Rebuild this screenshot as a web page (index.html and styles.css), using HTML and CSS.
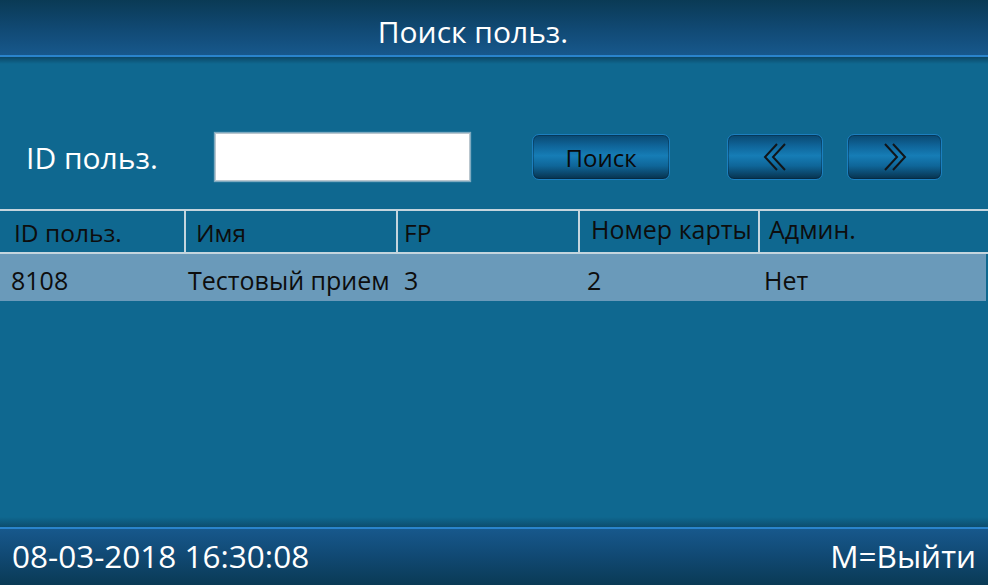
FILE: index.html
```html
<!DOCTYPE html>
<html lang="ru">

<head>
  <meta charset="UTF-8">
  <meta name="viewport" content="width=device-width, initial-scale=1.0">
  <title>Поиск польз.</title>
  <link rel="stylesheet" href="styles.css">
</head>

<body>

  <div class="topbar">Поиск польз.</div>

  <div class="main">

    <div class="toolbar">
      <label class="label" for="userid">ID польз.</label>
      <input type="text" id="userid" class="field">
      <button class="btn btn-search">Поиск</button>
      <button class="btn btn-prev">
        <svg width="24" height="28" viewBox="0 0 24 28">
          <polyline points="14,1 2,14 14,27" />
          <polyline points="22,1 10,14 22,27" />
        </svg>
      </button>
      <button class="btn btn-next">
        <svg width="24" height="28" viewBox="0 0 24 28">
          <polyline points="2,1 14,14 2,27" />
          <polyline points="10,1 22,14 10,27" />
        </svg>
      </button>
    </div>

    <div class="table">
      <div class="row head">
        <div class="cell">ID польз.</div>
        <div class="cell">Имя</div>
        <div class="cell">FP</div>
        <div class="cell">Номер карты</div>
        <div class="cell">Админ.</div>
      </div>
      <div class="row data">
        <div class="cell">8108</div>
        <div class="cell">Тестовый прием</div>
        <div class="cell">3</div>
        <div class="cell">2</div>
        <div class="cell">Нет</div>
      </div>
    </div>

  </div>

  <div class="statusbar">
    <span>08-03-2018 16:30:08</span>
    <span>M=Выйти</span>
  </div>

</body>

</html>
```

FILE: styles.css
```css
body {
  margin: 0;
  width: 988px;
  height: 585px;
  display: flex;
  flex-direction: column;
  font-family: 'Open Sans', 'DejaVu Sans', sans-serif;
  background-color: #0f6890;
  color: #fff;
  overflow: hidden;
}

.topbar {
  height: 57px;
  box-sizing: border-box;
  padding: 12px 42px 0 0;
  line-height: 40px;
  font-size: 30px;
  text-align: center;
  background: linear-gradient(to bottom, #0a3a55 0%, #114a75 55%, #17588c 100%);
  border-bottom: 2px solid #2a84cc;
}

.main {
  flex: 1;
  display: flex;
  flex-direction: column;
  background: linear-gradient(to bottom, #0b4766 0, #0f6890 7px, #0f6890 calc(100% - 10px), #0c4d6e 100%);
}

.toolbar {
  display: flex;
  align-items: center;
  height: 48px;
  margin-top: 76px;
  padding-left: 26px;
}

.label {
  width: 189px;
  font-size: 30px;
}

.field {
  width: 255px;
  height: 48px;
  box-sizing: border-box;
  margin: 0;
  border: 1px solid #b9c6ce;
  background-color: #fff;
  box-shadow: 0 0 1px 1px rgba(200, 215, 225, 0.6);
  outline: none;
}

.btn {
  height: 46px;
  box-sizing: border-box;
  padding: 0;
  border: 1px solid #1c7fbf;
  border-radius: 7px;
  background: linear-gradient(to bottom, #0a4870 0%, #0f659a 25%, #167db6 47%, #0f6699 70%, #0a4366 90%, #07324c 100%);
  box-shadow: inset 0 0 0 1px rgba(0, 30, 50, 0.35);
  color: #0a0a0a;
  font-family: inherit;
  font-size: 24px;
  display: flex;
  align-items: center;
  justify-content: center;
  cursor: pointer;
}

.btn svg polyline {
  fill: none;
  stroke: #111519;
  stroke-width: 2;
}

.btn-search {
  width: 138px;
  margin-left: 62px;
}

.btn-prev {
  width: 96px;
  margin-left: 57px;
}

.btn-next {
  width: 95px;
  margin-left: 24px;
}

.table {
  margin-top: 28px;
  border-top: 2px solid #c4d5de;
}

.row {
  display: grid;
  grid-template-columns: 184px 212px 182px 180px 1fr;
  color: #0d0d0d;
}

.head {
  height: 41px;
  border-bottom: 2px solid #c4d5de;
  font-size: 24.5px;
}

.head .cell {
  padding-top: 2px;
  line-height: 39px;
  white-space: nowrap;
}

.head .cell + .cell {
  border-left: 2px solid #c4d5de;
}

.head .cell:nth-child(1) { padding-left: 14px; }
.head .cell:nth-child(2) { padding-left: 10px; }
.head .cell:nth-child(3) { padding-left: 6px; }
.head .cell:nth-child(4) { padding-left: 11px; padding-top: 0; line-height: 36px; font-size: 25px; }
.head .cell:nth-child(5) { padding-left: 9px; padding-top: 0; line-height: 36px; font-size: 25px; }

.data {
  height: 47px;
  margin-right: 2px;
  background-color: #6a9aba;
  font-size: 25px;
}

.data .cell {
  padding-top: 5px;
  line-height: 42px;
  white-space: nowrap;
}

.data .cell:nth-child(1) { padding-left: 11px; }
.data .cell:nth-child(2) { padding-left: 4px; }
.data .cell:nth-child(3) { padding-left: 8px; }
.data .cell:nth-child(4) { padding-left: 9px; }
.data .cell:nth-child(5) { padding-left: 6px; }

.statusbar {
  height: 58px;
  box-sizing: border-box;
  display: flex;
  justify-content: space-between;
  padding: 6px 12px 0 12px;
  line-height: 42px;
  font-size: 31.5px;
  background: linear-gradient(to bottom, #17588c 0%, #114a75 45%, #0a3a55 100%);
  border-top: 2px solid #2a84cc;
}
```
